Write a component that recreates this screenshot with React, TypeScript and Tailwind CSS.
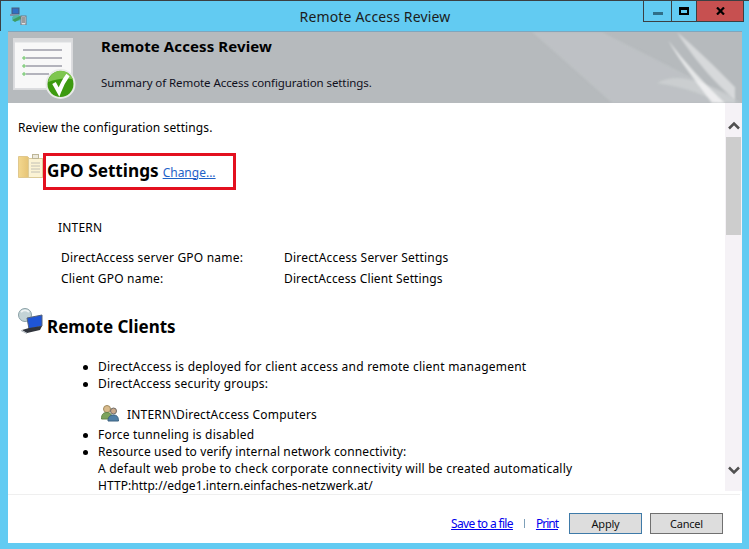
import React from 'react';

const font = { fontFamily: '"Noto Sans", "Open Sans", sans-serif' };

const AppIcon = () => (
  <svg width="17" height="18" viewBox="0 0 17 18" className="block">
    <rect x="2" y="1" width="7" height="6" fill="#2f6fc4" stroke="#4a5a78" />
    <rect x="0" y="7" width="9" height="2" fill="#7f8fa8" />
    <ellipse cx="7" cy="11" rx="5" ry="3" fill="#4fb6a8" />
    <path d="M2 13 L10 9 L12 11 L5 15 Z" fill="#3e9c62" />
    <rect x="11" y="9" width="5" height="9" fill="#dfe3e6" stroke="#6f7780" />
    <path d="M12 11h3M12 13h3M12 15h3" stroke="#555" />
  </svg>
);

const ReviewIcon = () => (
  <svg width="64" height="64" viewBox="0 0 64 64" className="block">
    <rect x="0" y="1" width="60" height="52" fill="#d9dadc" />
    <rect x="1.500" y="5" width="57" height="46.500" fill="#f8f8f8" stroke="#dcdde0" />
    <path d="M10 13H49M13 21H49M13 29H49M13 37H36" stroke="#9c9ca8" strokeWidth="1.300" />
    <path d="M9 21h4M11 19v4M9 29h4M11 27v4M9 37h4M11 35v4" stroke="#69c463" />
    <circle cx="47.500" cy="47" r="15" fill="#e8eae8" />
    <circle cx="47.500" cy="47" r="13" fill="#3d9a10" />
    <path d="M35 45a13 13 0 0 1 25 -3q-12 -2 -25 3Z" fill="#7fc64f" />
    <path d="M41 46l5 9c3-8 6-13 9-17" fill="none" stroke="#fff" strokeWidth="4" />
  </svg>
);

const FolderIcon = () => (
  <svg width="26" height="26" viewBox="0 0 26 26" className="block">
    <defs>
      <linearGradient id="folder" x1="0" x2="1" y1="0" y2="0">
        <stop offset="0" stopColor="#f3d88f" />
        <stop offset="1" stopColor="#dfb968" />
      </linearGradient>
    </defs>
    <path d="M0.500 3.500h9l2 2h4v19h-15Z" fill="url(#folder)" stroke="#e0c88e" />
    <rect x="10.500" y="5.500" width="14" height="19" fill="#fbf3d4" stroke="#dccb98" />
    <rect x="14.500" y="1.500" width="6" height="4" fill="#ece9dc" stroke="#bdb596" />
    <path d="M13 10h9M13 13h9M13 16h9M13 19h9" stroke="#c2c0b5" />
  </svg>
);

const ClientsIcon = () => (
  <svg width="26" height="26" viewBox="0 0 26 26" className="block">
    <circle cx="7" cy="7" r="6.500" fill="#c3d3d6" stroke="#8aa0a6" />
    <path d="M3 4a6 6 0 0 1 8 0" fill="none" stroke="#eef3f4" strokeWidth="2" />
    <path d="M9 10l15-3v11l-13 3Z" fill="#1f55d6" stroke="#55627a" />
    <path d="M4 22l7-2 13-2-2 4-13 3Z" fill="#30343c" />
    <path d="M3 22l6 3v1l-6-3Z" fill="#aab2ba" />
  </svg>
);

const GroupIcon = () => (
  <svg width="18" height="18" viewBox="0 0 18 18" className="block">
    <circle cx="6" cy="5" r="3.500" fill="#d9bb8c" stroke="#a08a5f" />
    <path d="M0.500 15c0-5 2-6.500 5.500-6.500s5 2 5 6.500Z" fill="#7da35c" stroke="#64854a" />
    <circle cx="12.500" cy="7" r="3" fill="#c9a98b" stroke="#6d6a66" />
    <path d="M7 17c0-4 2-6 5.500-6s5 2 5 6Z" fill="#4f7fa6" stroke="#3c6280" />
  </svg>
);

const BannerArt = () => (
  <svg viewBox="0 0 250 72" preserveAspectRatio="none" className="absolute right-0 top-0 h-full w-[250px] blur-[1px]">
    <path d="M40 0H110L250 72H120Z" fill="#c3c6ca" opacity="0.6" />
    <path d="M176 8C192 30 215 55 233 72H220C204 50 188 30 176 8Z" fill="#fff" opacity="0.65" />
    <path d="M165 52C185 40 210 50 243 66V72H226C206 60 186 55 165 52Z" fill="#fff" opacity="0.2" />
    <path d="M185 0C200 25 225 55 243 68V56C222 34 202 15 185 0Z" fill="#fff" opacity="0.45" />
  </svg>
);

const Chevron = ({ up }: { up?: boolean }) => (
  <svg width="12" height="9" viewBox="0 0 12 9" className="block">
    <path d={up ? 'M1 7.500L6 2.500L11 7.500' : 'M1 1.500L6 6.500L11 1.500'} fill="none" stroke="#505050" strokeWidth="2.500" />
  </svg>
);

const Bullet = ({ children }: { children: React.ReactNode }) => (
  <li className="flex">
    <span className="w-[15px] shrink-0 pt-[7px]">
      <span className="block h-[5px] w-[5px] rounded-full bg-black" />
    </span>
    <span>{children}</span>
  </li>
);

export default function App() {
  return (
    <div className="h-[549px] w-[749px] overflow-hidden bg-[#62cbf2] text-[12px] leading-[17px] text-black" style={font}>
      {/* Title bar */}
      <div className="flex h-[31px] items-start border-t border-l border-[#3b3f42] pl-[9px]">
        <div className="pt-[6px]">
          <AppIcon />
        </div>
        <div className="flex-1 pl-[80px] pt-[6px] text-center text-[14px] leading-[19px] tracking-[0.15px] text-[#1c1c1c]">Remote Access Review</div>
        <div className="mr-[5px] flex h-[21px] border-x border-b border-[#3b3f42]">
          <div className="flex w-[28px] items-center justify-center border-r border-[#3b3f42]">
            <span className="mt-[5px] h-[3px] w-[10px] bg-[#2f6e88]" />
          </div>
          <div className="flex w-[25px] items-center justify-center border-r border-[#3b3f42]">
            <span className="h-[8px] w-[10px] border-2 border-t-[3px] border-black" />
          </div>
          <div className="flex w-[46px] items-center justify-center bg-[#c75050]">
            <svg width="9" height="8" viewBox="0 0 9 8">
              <path d="M1 0.500L8 7.500M8 0.500L1 7.500" stroke="#000" strokeWidth="2.200" />
            </svg>
          </div>
        </div>
      </div>

      {/* Dialog */}
      <div className="ml-[8px] flex h-[512px] w-[734px] flex-col bg-white">
        {/* Banner */}
        <div className="relative flex h-[72px] shrink-0 overflow-hidden border-t border-[#7fa6bd] bg-[#b6babd]">
          <BannerArt />
          <div className="relative w-[93px] shrink-0 pl-[5px] pt-[5px]">
            <ReviewIcon />
          </div>
          <div className="relative">
            <div className="pt-[4px] text-[15px] font-bold leading-[20px] tracking-[0.1px] text-black">Remote Access Review</div>
            <div className="pt-[18px] text-[11.500px] tracking-[-0.08px] text-[#10101c]">Summary of Remote Access configuration settings.</div>
          </div>
        </div>

        {/* Scrollable report */}
        <div className="flex h-[391px] shrink-0 items-start overflow-hidden">
          <div className="min-w-0 flex-1 pl-[10px] tracking-[0.2px]">
            <div className="pt-[16px] tracking-[0.1px]">Review the configuration settings.</div>

            <div className="mt-[17px] flex">
              <FolderIcon />
              <div className="relative ml-[3px] flex h-[37px] items-center pb-[2px]">
                <span className="text-[17.200px] font-bold leading-[24px] tracking-normal">GPO Settings</span>
                <a className="ml-[4px] mt-[3px] tracking-normal text-[#1e62c8] underline">Change...</a>
                <span className="absolute -left-[4px] top-0 h-[37px] w-[193px] border-[3px] border-[#e3101f]" />
              </div>
            </div>

            <div className="ml-[40px] mt-[29px]">INTERN</div>

            <div className="ml-[43px] mt-[13px] grid grid-cols-[223px_1fr] gap-y-[4px]">
              <div>DirectAccess server GPO name:</div>
              <div>DirectAccess Server Settings</div>
              <div>Client GPO name:</div>
              <div className="tracking-[0.13px]">DirectAccess Client Settings</div>
            </div>

            <div className="mt-[21px] flex">
              <ClientsIcon />
              <div className="ml-[3px] pt-[7px] text-[17px] font-bold leading-[24px] tracking-normal">Remote Clients</div>
            </div>

            <ul className="ml-[65px] mt-[19px]">
              <Bullet>
                <span className="tracking-[0.23px]">DirectAccess is deployed for client access and remote client management</span>
              </Bullet>
              <Bullet>DirectAccess security groups:</Bullet>
            </ul>
            <div className="ml-[83px] mt-[11px] flex h-[20px] items-center gap-[8px]">
              <GroupIcon />
              <span className="pt-[3px]">INTERN\DirectAccess Computers</span>
            </div>
            <ul className="ml-[65px] mt-[3px]">
              <Bullet>Force tunneling is disabled</Bullet>
              <Bullet>
                <span className="tracking-[0.12px]">Resource used to verify internal network connectivity:</span>
                <br />
                <span className="tracking-[0.22px]">A default web probe to check corporate connectivity will be created automatically</span>
                <br />
                <span className="tracking-[0.05px]">HTTP:http://edge1.intern.einfaches-netzwerk.at/</span>
              </Bullet>
            </ul>
          </div>

          {/* Scrollbar */}
          <div className="flex h-[388px] w-[17px] shrink-0 flex-col items-center bg-[#f5f2f6]">
            <div className="flex h-[34px] w-full items-center justify-center pt-[10px]">
              <Chevron up />
            </div>
            <div className="h-[98px] w-[15px] bg-[#cdcdcd]" />
            <div className="flex-1" />
            <div className="flex h-[44px] w-full items-center justify-center pt-[2px]">
              <Chevron />
            </div>
          </div>
        </div>

        {/* Footer */}
        <div className="mr-[2px] flex flex-1 items-start justify-end border-t border-[#efefef] pr-[17px] pt-[18px] text-[12px]">
          <a className="mt-[2px] tracking-[-0.65px] text-[#0000ee] underline">Save to a file</a>
          <span className="mx-[11px] mt-[6px] h-[9px] w-px bg-[#7d9fb8]" />
          <a className="mt-[2px] tracking-[-1px] text-[#0000ee] underline">Print</a>
          <button className="ml-[11px] h-[21px] w-[73px] border border-[#3e7aa8] bg-[#dddddd] text-[11px] leading-[17px] tracking-[-0.2px] text-[#111]">Apply</button>
          <button className="ml-[8px] h-[21px] w-[73px] border border-[#707070] bg-[#dddddd] text-[11px] leading-[17px] tracking-[-0.2px] text-[#111]">Cancel</button>
        </div>
      </div>
    </div>
  );
}
